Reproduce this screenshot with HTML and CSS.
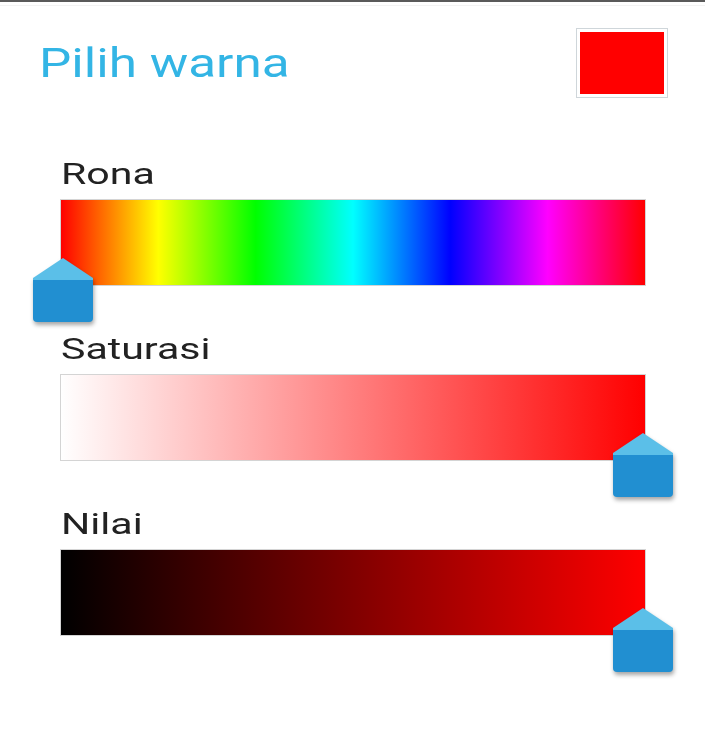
FILE: index.html
```html
<!DOCTYPE html>
<html lang="id">
<head>
<meta charset="utf-8">
<title>Pilih warna</title>
<link rel="stylesheet" href="styles.css">
</head>
<body>
  <div class="dialog">
    <header class="dialog-header">
      <h1 class="dialog-title"><span class="stretch">Pilih warna</span></h1>
      <div class="swatch"><div class="swatch-fill"></div></div>
    </header>

    <section class="channel">
      <div class="channel-label"><span class="stretch-label">Rona</span></div>
      <div class="track track-hue">
        <svg class="thumb" style="left: -28px" width="62" height="66" viewBox="0 0 62 66" aria-hidden="true">
          <path class="thumb-body" d="M0 20 L60 20 L60 60 Q60 64 56 64 L4 64 Q0 64 0 60 Z"/>
          <path class="thumb-cap" d="M30 0 L60 20 L60 22 L0 22 L0 20 Z"/>
        </svg>
      </div>
    </section>

    <section class="channel">
      <div class="channel-label"><span class="stretch-label">Saturasi</span></div>
      <div class="track track-sat">
        <svg class="thumb" style="left: 552px" width="62" height="66" viewBox="0 0 62 66" aria-hidden="true">
          <path class="thumb-body" d="M0 20 L60 20 L60 60 Q60 64 56 64 L4 64 Q0 64 0 60 Z"/>
          <path class="thumb-cap" d="M30 0 L60 20 L60 22 L0 22 L0 20 Z"/>
        </svg>
      </div>
    </section>

    <section class="channel">
      <div class="channel-label"><span class="stretch-label">Nilai</span></div>
      <div class="track track-val">
        <svg class="thumb" style="left: 552px" width="62" height="66" viewBox="0 0 62 66" aria-hidden="true">
          <path class="thumb-body" d="M0 20 L60 20 L60 60 Q60 64 56 64 L4 64 Q0 64 0 60 Z"/>
          <path class="thumb-cap" d="M30 0 L60 20 L60 22 L0 22 L0 20 Z"/>
        </svg>
      </div>
    </section>
  </div>
</body>
</html>
```

FILE: styles.css
```css
html, body {
  margin: 0;
  padding: 0;
  background: #ffffff;
}

body {
  font-family: Roboto, "Noto Sans", "Liberation Sans", sans-serif;
  width: 705px;
  height: 730px;
  overflow: hidden;
}

.dialog {
  border-top: 2px solid #5a5a5a;
  box-shadow: inset 0 3px 0 #ffffff, inset 0 4px 0 #f3f3f3;
}

.stretch,
.stretch-label {
  display: inline-block;
  transform-origin: 0 50%;
  white-space: nowrap;
}

.stretch {
  transform: scaleX(1.25);
}

.stretch-label {
  transform: scaleX(1.37);
}

.dialog-header {
  display: flex;
  align-items: center;
  justify-content: space-between;
  padding: 25px 37px 0 39px;
  height: 72px;
}

.dialog-title {
  margin: 0;
  font-size: 41px;
  font-weight: 400;
  line-height: 48px;
  color: #33b5e5;
}

.swatch {
  width: 84px;
  height: 62px;
  padding: 3px;
  border: 1px solid #cfd6da;
  background: #ffffff;
}

.swatch-fill {
  width: 100%;
  height: 100%;
  background: #ff0000;
}

.channel {
  margin: 0 0 45px 60px;
  width: 586px;
}

.dialog-header + .channel {
  margin-top: 57px;
}

.channel-label {
  font-size: 30px;
  line-height: 36px;
  color: #222222;
  padding-left: 1px;
  margin-bottom: 7px;
}

.track {
  position: relative;
  height: 85px;
  border: 1px solid #d4d4d4;
}

.track-hue {
  background: linear-gradient(to right,
    #ff0000 0%, #ffff00 16.667%, #00ff00 33.333%, #00ffff 50%,
    #0000ff 66.667%, #ff00ff 83.333%, #ff0000 100%);
}

.track-sat {
  background: linear-gradient(to right, #ffffff, #ff0000);
}

.track-val {
  background: linear-gradient(to right, #000000, #ff0000);
}

.thumb {
  position: absolute;
  top: 58px;
  overflow: visible;
  filter: drop-shadow(1px 3px 2px rgba(0, 0, 0, 0.35));
}

.thumb-body {
  fill: #218fd1;
}

.thumb-cap {
  fill: #5bbfe8;
}
```
